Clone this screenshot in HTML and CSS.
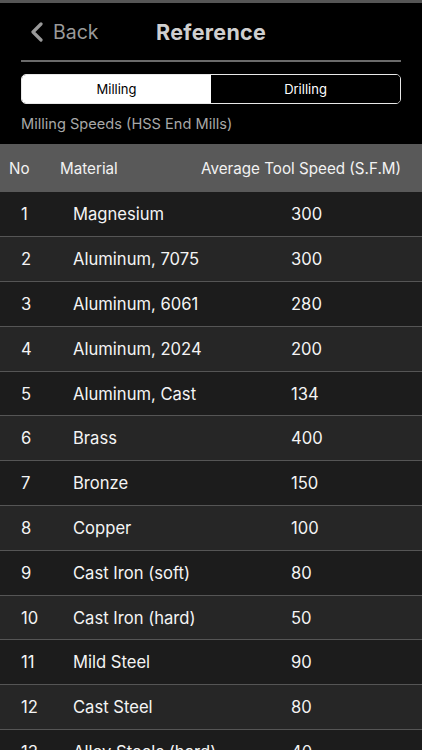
FILE: index.html
```html
<!DOCTYPE html>
<html lang="en">
<head>
  <meta charset="UTF-8" />
  <title>Reference</title>
  <link rel="stylesheet" href="styles.css">
</head>
<body>

  <div class="status-strip"></div>

  <header class="nav">
    <a class="back" href="#">
      <svg class="chevron" width="16" height="20" viewBox="0 0 16 20">
        <path d="M12 2 L4 10 L12 18" fill="none" stroke="#9a9a9a" stroke-width="3.2" stroke-linecap="round" stroke-linejoin="round"/>
      </svg>
      <span>Back</span>
    </a>
    <h1>Reference</h1>
  </header>

  <div class="divider"></div>

  <!-- segmented control -->
  <div class="segment">
    <button class="seg active">Milling</button>
    <button class="seg">Drilling</button>
  </div>

  <p class="subtitle">Milling Speeds (HSS End Mills)</p>

  <table class="speeds">
    <colgroup>
      <col class="w-no">
      <col class="w-mat">
      <col class="w-spd">
    </colgroup>
    <thead>
      <tr>
        <th class="c-no">No</th>
        <th class="c-mat">Material</th>
        <th class="c-spd">Average Tool Speed (S.F.M)</th>
      </tr>
    </thead>
    <tbody>
      <tr><td class="c-no">1</td><td class="c-mat">Magnesium</td><td class="c-spd">300</td></tr>
      <tr><td class="c-no">2</td><td class="c-mat">Aluminum, 7075</td><td class="c-spd">300</td></tr>
      <tr><td class="c-no">3</td><td class="c-mat">Aluminum, 6061</td><td class="c-spd">280</td></tr>
      <tr><td class="c-no">4</td><td class="c-mat">Aluminum, 2024</td><td class="c-spd">200</td></tr>
      <tr><td class="c-no">5</td><td class="c-mat">Aluminum, Cast</td><td class="c-spd">134</td></tr>
      <tr><td class="c-no">6</td><td class="c-mat">Brass</td><td class="c-spd">400</td></tr>
      <tr><td class="c-no">7</td><td class="c-mat">Bronze</td><td class="c-spd">150</td></tr>
      <tr><td class="c-no">8</td><td class="c-mat">Copper</td><td class="c-spd">100</td></tr>
      <tr><td class="c-no">9</td><td class="c-mat">Cast Iron (soft)</td><td class="c-spd">80</td></tr>
      <tr><td class="c-no">10</td><td class="c-mat">Cast Iron (hard)</td><td class="c-spd">50</td></tr>
      <tr><td class="c-no">11</td><td class="c-mat">Mild Steel</td><td class="c-spd">90</td></tr>
      <tr><td class="c-no">12</td><td class="c-mat">Cast Steel</td><td class="c-spd">80</td></tr>
      <tr><td class="c-no">13</td><td class="c-mat">Alloy Steels (hard)</td><td class="c-spd">40</td></tr>
    </tbody>
  </table>

</body>
</html>
```

FILE: styles.css
```css
body {
  margin: 0;
  background-color: #000;
  font-family: Inter, "Noto Sans", sans-serif;
  color: #fff;
  overflow: hidden;
}
.status-strip {
  height: 3px;
  background-color: #555;
}
.nav {
  display: flex;
  align-items: center;
  height: 57px;
  padding: 0 21px 0 29px;
}
.back {
  display: flex;
  align-items: center;
  gap: 8px;
  color: #9a9a9a;
  text-decoration: none;
  font-size: 19.5px;
  width: 127px;
}
.chevron {
  display: block;
}
.nav h1 {
  margin: 0;
  font-size: 21.5px;
  font-weight: 700;
  color: #cfcfcf;
  letter-spacing: 0.3px;
}
.divider {
  height: 2px;
  margin: 0 21px;
  background-color: #6a6a6a;
}
.segment {
  display: flex;
  margin: 12px 21px 0;
  height: 28px;
  border: 1px solid #e8e8e8;
  border-radius: 5px;
  overflow: hidden;
}
.seg {
  flex: 1;
  border: none;
  background: #000;
  color: #fff;
  font-family: inherit;
  font-size: 13px;
  padding: 0;
}
.seg.active {
  background: #fff;
  color: #000;
}
.subtitle {
  margin: 0;
  padding: 11px 21px 0;
  height: 29px;
  font-size: 14.6px;
  color: #a8a8a8;
}
.speeds {
  width: 100%;
  border-collapse: collapse;
  table-layout: fixed;
}
.w-no { width: 60px; }
.w-mat { width: 141px; }
.w-spd { width: 221px; }
.speeds thead tr {
  background-color: #595959;
  height: 48px;
}
.speeds th {
  font-weight: 400;
  font-size: 15.2px;
  color: #f2f2f2;
  text-align: left;
  padding: 0;
  white-space: nowrap;
}
.speeds th.c-no { padding-left: 9px; }
.speeds tbody tr {
  height: 44.8px;
  background-color: #1c1c1c;
  border-bottom: 1px solid #555;
}
.speeds tbody tr:nth-child(even) {
  background-color: #262626;
}
.speeds td {
  padding: 0;
  font-size: 16.6px;
  color: #f4f4f4;
  white-space: nowrap;
  overflow: visible;
}
.speeds td.c-no { padding-left: 21px; }
.speeds td.c-mat { padding-left: 13px; }
.speeds td.c-spd { padding-left: 90px; }
```
